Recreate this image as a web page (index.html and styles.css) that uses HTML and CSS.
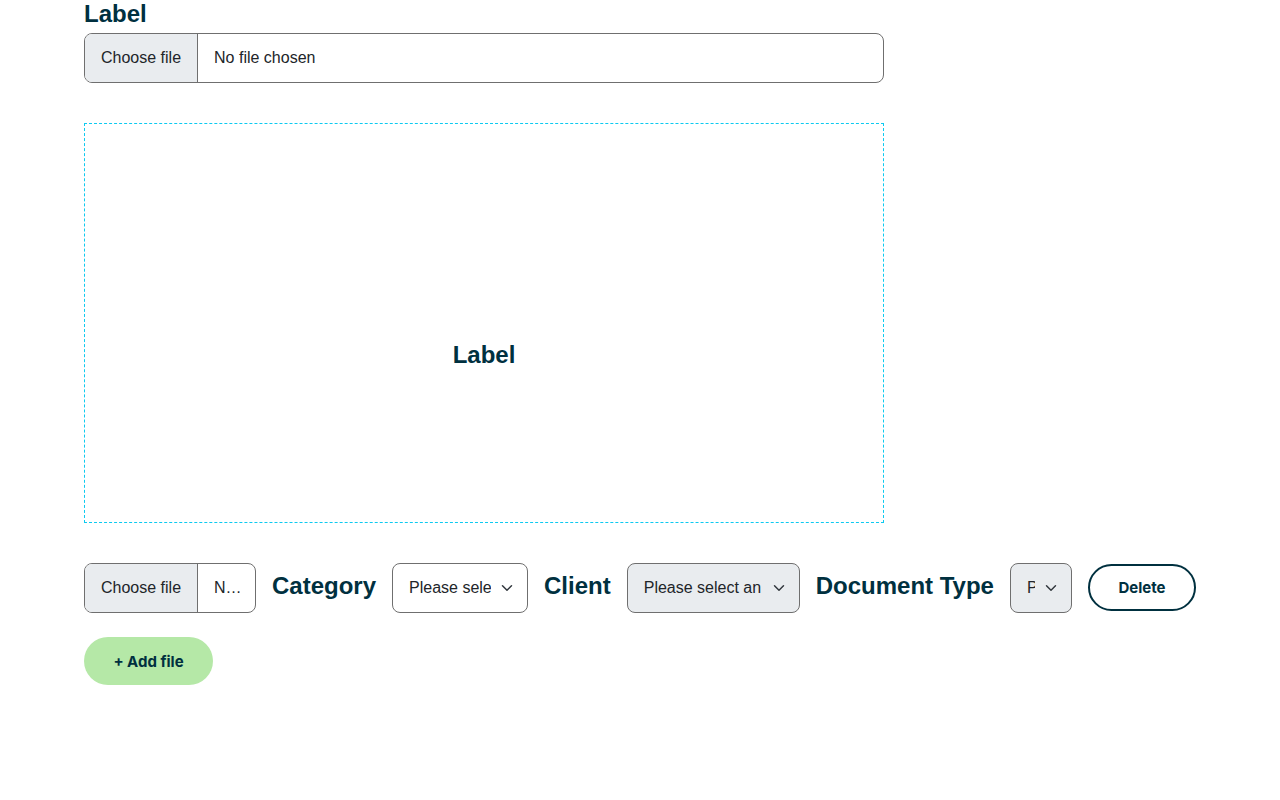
FILE: index.html
```html
<!DOCTYPE html>
<html lang="en">
<head>
<meta charset="utf-8">
<title>Upload</title>
<link rel="stylesheet" href="styles.css">
</head>
<body>
<main class="page">
  <div class="field">
    <label class="field-label" for="f1">Label</label>
    <label class="file file-wide">
      <input id="f1" type="file" class="sr-only">
      <span class="file-btn">Choose file</span>
      <span class="file-name">No file chosen</span>
    </label>
  </div>

  <div class="dropzone">
    <span class="dropzone-label">Label</span>
  </div>

  <div class="row">
    <label class="file file-narrow">
      <input type="file" class="sr-only">
      <span class="file-btn">Choose file</span>
      <span class="file-name">N…</span>
    </label>
    <span class="row-label">Category</span>
    <select class="select select-cat">
      <option>Please select a category</option>
    </select>
    <span class="row-label">Client</span>
    <select class="select select-client is-disabled">
      <option>Please select an client</option>
    </select>
    <span class="row-label">Document Type</span>
    <select class="select select-doc is-disabled">
      <option>Please select</option>
    </select>
    <button class="btn btn-outline" type="button">Delete</button>
  </div>

  <button class="btn btn-green" type="button">+ Add file</button>
</main>
</body>
</html>
```

FILE: styles.css
```css
* { box-sizing: border-box; }

html, body {
  margin: 0;
  background: #ffffff;
}

body {
  font-family: "Liberation Sans", Arial, sans-serif;
  color: #212529;
}

.page {
  padding-left: 84px;
  width: 1280px;
}

.field {
  display: flex;
  flex-direction: column;
  width: 800px;
}

.field-label {
  font-size: 24px;
  line-height: 28px;
  font-weight: 700;
  color: #00303f;
  margin-bottom: 5px;
}

.sr-only {
  position: absolute;
  width: 1px;
  height: 1px;
  overflow: hidden;
  clip: rect(0 0 0 0);
  white-space: nowrap;
}

.file {
  display: flex;
  height: 50px;
  border: 1px solid #6f6f6f;
  border-radius: 8px;
  overflow: hidden;
  font-size: 16px;
  color: #212529;
  background: #ffffff;
  cursor: pointer;
}

.file-wide { width: 800px; }
.file-narrow { width: 172px; flex: none; }

.file-btn {
  display: flex;
  align-items: center;
  padding: 0 16px;
  background: #e9ecef;
  border-right: 1px solid #6f6f6f;
  white-space: nowrap;
  flex: none;
}

.file-name {
  display: block;
  line-height: 48px;
  padding: 0 16px;
  white-space: nowrap;
  overflow: hidden;
  min-width: 0;
}

.dropzone {
  margin-top: 40px;
  width: 800px;
  height: 400px;
  border: 1px dashed #0dcaf0;
  padding-top: 64px;
  display: flex;
  align-items: center;
  justify-content: center;
}

.dropzone-label {
  font-size: 24px;
  font-weight: 700;
  color: #00303f;
}

.row {
  margin-top: 40px;
  display: flex;
  align-items: center;
  gap: 16px;
}

.row-label {
  font-size: 24px;
  line-height: 28px;
  font-weight: 700;
  color: #00303f;
  white-space: nowrap;
  margin-top: -4px;
}

.select {
  appearance: none;
  -webkit-appearance: none;
  height: 50px;
  border: 1px solid #6f6f6f;
  border-radius: 8px;
  font-family: "Liberation Sans", Arial, sans-serif;
  font-size: 16px;
  line-height: 20px;
  color: #212529;
  padding: 0 36px 1px 16px;
  background-color: #ffffff;
  background-image: url("data:image/svg+xml,%3Csvg xmlns='http://www.w3.org/2000/svg' viewBox='0 0 16 16'%3E%3Cpath fill='none' stroke='%23343a40' stroke-linecap='round' stroke-linejoin='round' stroke-width='2' d='m2 5 6 6 6-6'/%3E%3C/svg%3E");
  background-repeat: no-repeat;
  background-position: right 14px center;
  background-size: 12px 12px;
  flex: none;
}

.select.is-disabled { background-color: #e9ecef; }

.select-cat { width: 136px; }
.select-client { width: 173px; }
.select-doc { width: 62px; }

.btn {
  font-family: Inter, "Liberation Sans", Arial, sans-serif;
  font-weight: 700;
  font-size: 15px;
  color: #00303f;
  cursor: pointer;
}

.btn-outline {
  height: 47px;
  width: 108px;
  border: 2px solid #00303f;
  border-radius: 24px;
  background: #ffffff;
  flex: none;
  margin-top: -1px;
  padding-bottom: 2px;
}

.btn-green {
  margin-top: 24px;
  width: 129px;
  height: 48px;
  border: none;
  border-radius: 24px;
  background: #b5e8a7;
}
```
